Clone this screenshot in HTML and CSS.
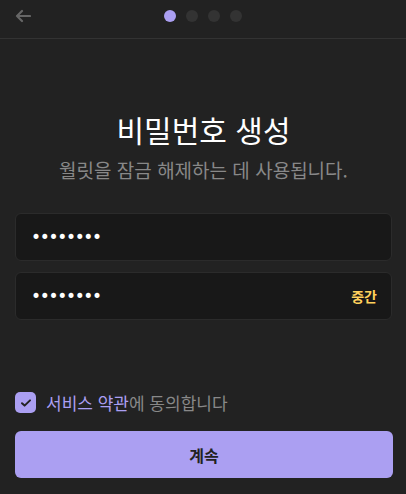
FILE: index.html
```html
<!DOCTYPE html>
<html lang="ko">
<head>
    <meta charset="UTF-8">
    <meta name="viewport" content="width=device-width, initial-scale=1.0">
    <title>비밀번호 생성</title>
    <link rel="stylesheet" href="styles.css">
</head>
<body>

    <div class="header">
        <div class="back">
            <svg width="16" height="14" viewBox="0 0 16 14">
                <path d="M15 7H2M7 2L2 7l5 5" fill="none" stroke="#666" stroke-width="2.2" stroke-linecap="round" stroke-linejoin="round"/>
            </svg>
        </div>
        <div class="steps">
            <span class="step active"></span>
            <span class="step"></span>
            <span class="step"></span>
            <span class="step"></span>
        </div>
    </div>

    <div class="content">
        <h1>비밀번호 생성</h1>
        <p class="subtitle">월릿을 잠금 해제하는 데 사용됩니다.</p>

        <div class="field">
            <span class="dots">••••••••</span>
        </div>
        <div class="field">
            <span class="dots">••••••••</span>
            <span class="strength">중간</span>
        </div>
    </div>

    <div class="footer">
        <label class="agree">
            <span class="checkbox">
                <svg width="12" height="10" viewBox="0 0 12 10">
                    <path d="M2 5.2l2.6 2.4L10 2.4" fill="none" stroke="#222" stroke-width="2" stroke-linecap="round" stroke-linejoin="round"/>
                </svg>
            </span>
            <span><span class="terms">서비스 약관</span>에 동의합니다</span>
        </label>
        <button class="continue">계속</button>
    </div>

</body>
</html>
```

FILE: styles.css
```css
body {
    margin: 0;
    background-color: #222;
    color: #fff;
    font-family: 'Noto Sans CJK KR', 'Noto Sans', sans-serif;
    height: 494px;
    display: flex;
    flex-direction: column;
}

.header {
    height: 39px;
    border-bottom: 1px solid #333;
    display: flex;
    align-items: center;
    justify-content: center;
    position: relative;
    box-sizing: border-box;
    padding-bottom: 6px;
}

.back {
    position: absolute;
    left: 15px;
    top: 9px;
}

.back svg {
    display: block;
}

.steps {
    display: flex;
    gap: 10px;
}

.step {
    width: 12px;
    height: 12px;
    border-radius: 50%;
    background-color: #333;
}

.step.active {
    background-color: #ab9ff2;
}

.content {
    padding: 0 14px 0 15px;
    text-align: center;
    flex: 1;
}

h1 {
    font-size: 30px;
    font-weight: 400;
    margin: 69px 0 0;
    line-height: 42px;
}

.subtitle {
    font-size: 19px;
    color: #888;
    margin: 6px 0 29px;
    line-height: 28px;
}

.field {
    height: 48px;
    background-color: #181818;
    border: 1px solid #2b2b2b;
    border-radius: 6px;
    box-sizing: border-box;
    display: flex;
    align-items: center;
    justify-content: space-between;
    padding: 0 14px 0 15px;
    margin-bottom: 11px;
}

.dots {
    font-family: 'DejaVu Sans', sans-serif;
    font-size: 17px;
    letter-spacing: -1.3px;
    color: #fff;
}

.strength {
    color: #ffd15c;
    font-size: 14px;
    font-weight: bold;
}

.footer {
    padding: 0 13px 16px 15px;
}

.agree {
    display: flex;
    align-items: center;
    gap: 10px;
    font-size: 17px;
    color: #888;
    margin-bottom: 16px;
}

.checkbox {
    width: 21px;
    height: 21px;
    border-radius: 5px;
    background-color: #ab9ff2;
    display: flex;
    align-items: center;
    justify-content: center;
}

.terms {
    color: #ab9ff2;
}

.continue {
    width: 100%;
    height: 47px;
    border: none;
    border-radius: 6px;
    background-color: #ab9ff2;
    color: #222;
    font-family: 'Noto Sans CJK KR', sans-serif;
    font-size: 16px;
    font-weight: bold;
}
```
